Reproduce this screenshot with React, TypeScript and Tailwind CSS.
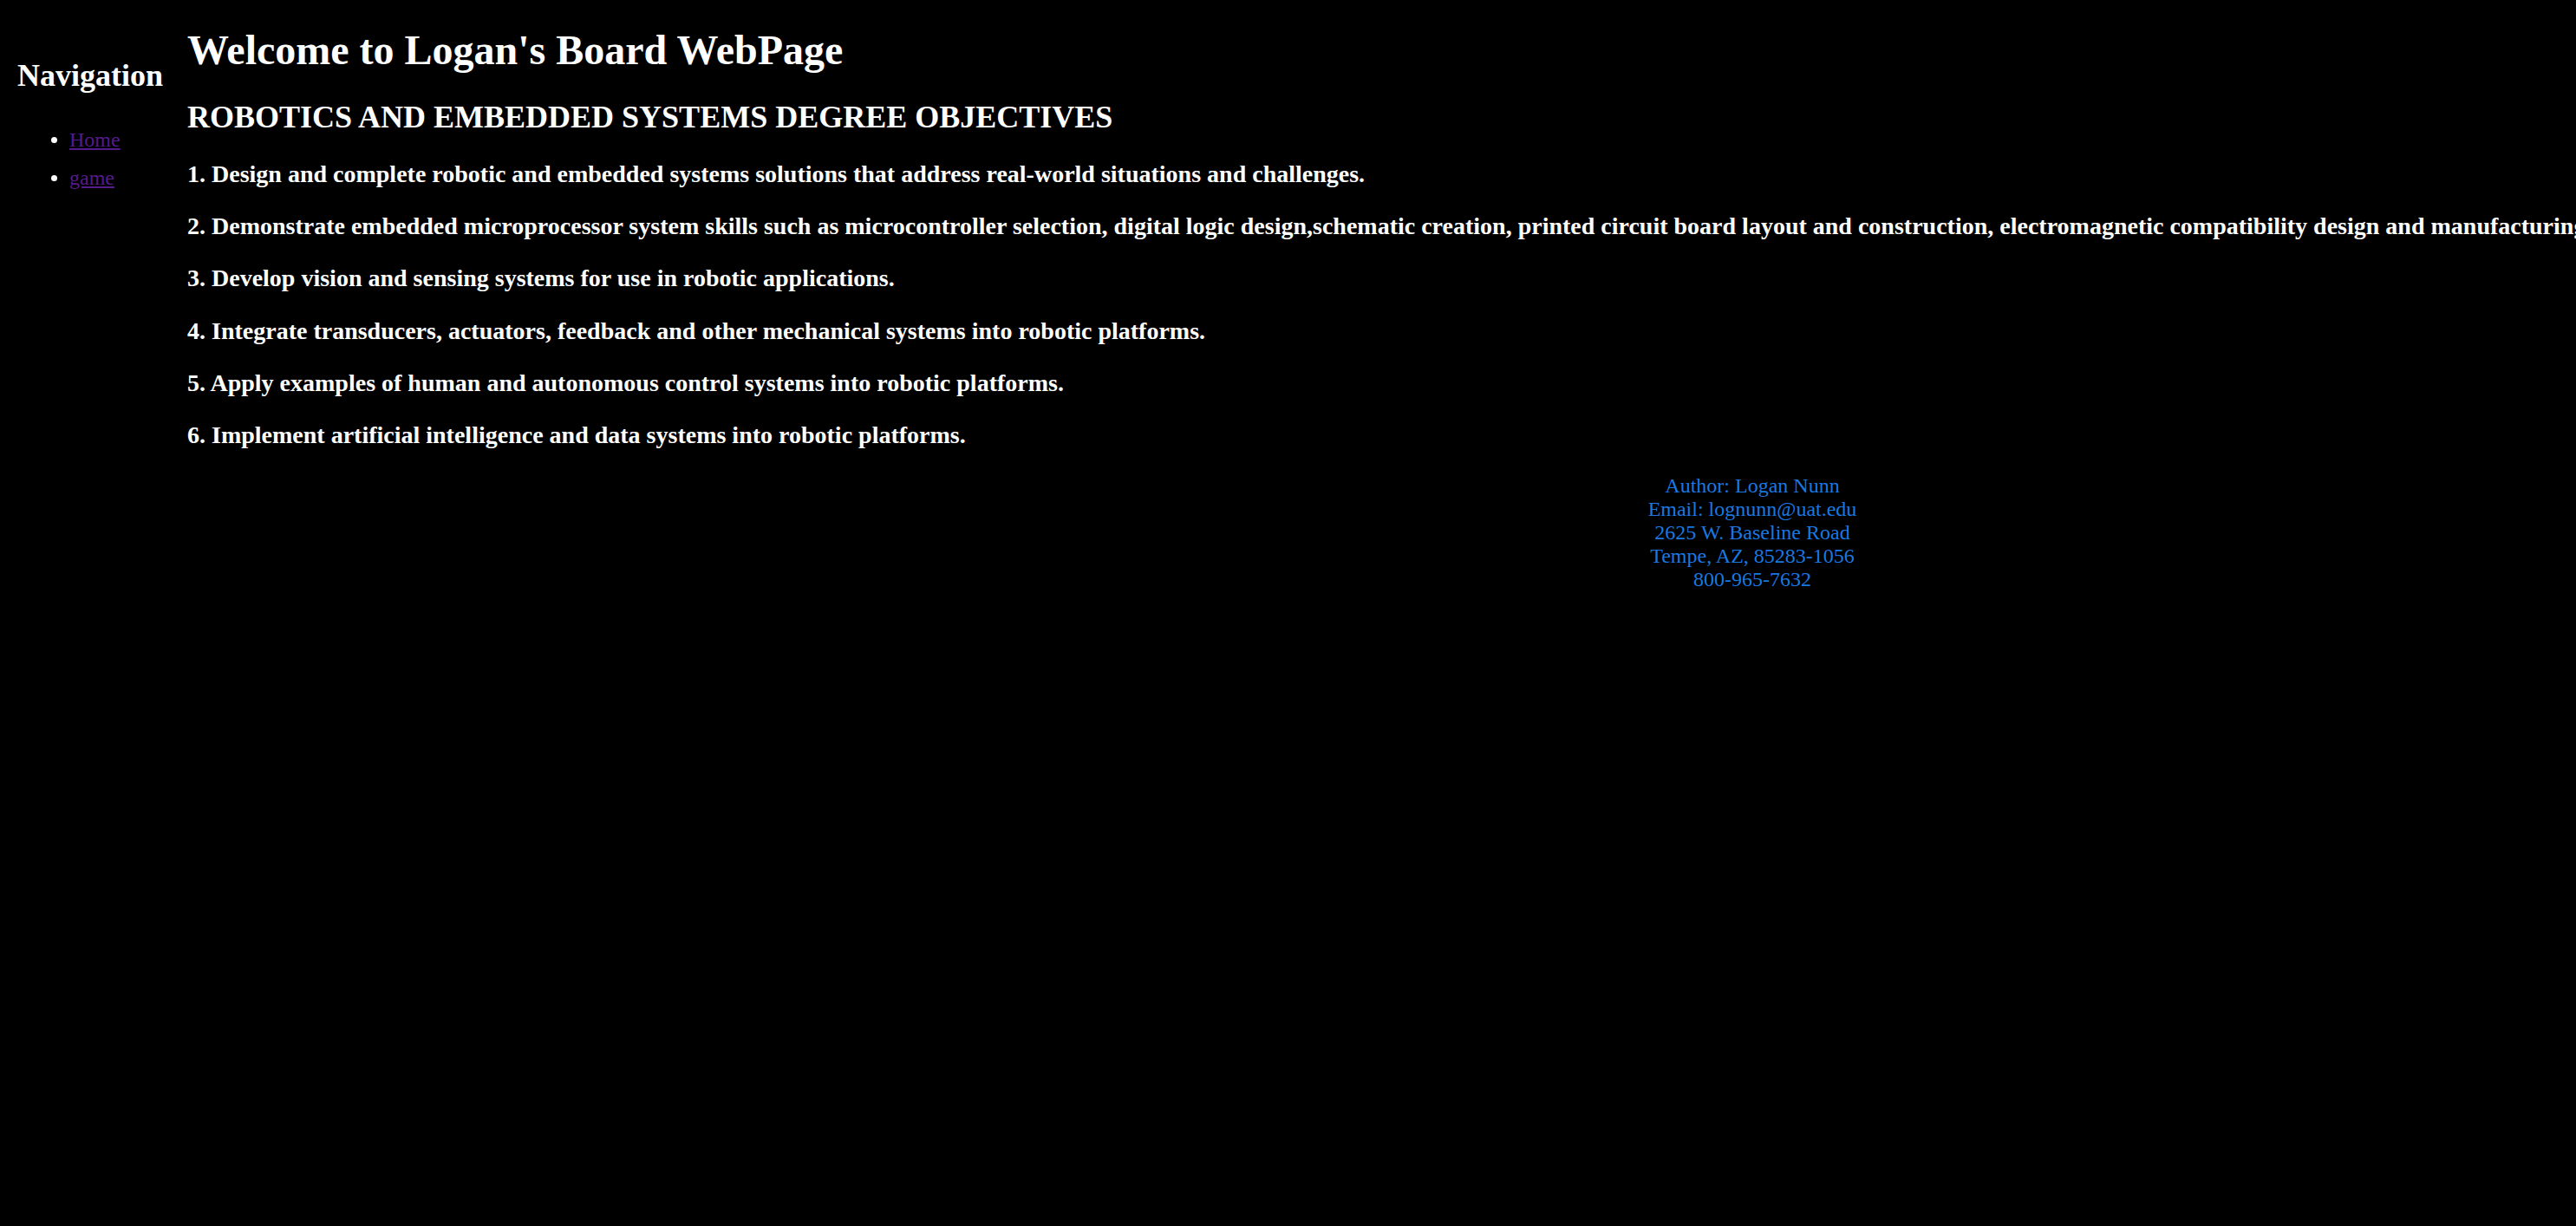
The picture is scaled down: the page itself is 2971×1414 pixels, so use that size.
import React from 'react'

const objectives = [
  '1. Design and complete robotic and embedded systems solutions that address real-world situations and challenges.',
  '2. Demonstrate embedded microprocessor system skills such as microcontroller selection, digital logic design,schematic creation, printed circuit board layout and construction, electromagnetic compatibility design and manufacturing.',
  '3. Develop vision and sensing systems for use in robotic applications.',
  '4. Integrate transducers, actuators, feedback and other mechanical systems into robotic platforms.',
  '5. Apply examples of human and autonomous control systems into robotic platforms.',
  '6. Implement artificial intelligence and data systems into robotic platforms.',
]

export default function App() {
  return (
    <div className="min-h-screen overflow-hidden bg-black font-['Liberation_Serif',serif] text-white">
      <div className="flex items-start">
        {/* Sidebar nav */}
        <nav className="w-[216px] shrink-0 pl-[20px]">
          <h2 className="mt-[67px] text-[36px] font-bold leading-[41px]">Navigation</h2>
          <ul className="mt-[31px] list-disc pl-[60px] text-[24px] leading-[44px]">
            <li>
              <a href="#" className="text-[#551a8b] underline">Home</a>
            </li>
            <li>
              <a href="#" className="text-[#551a8b] underline">game</a>
            </li>
          </ul>
        </nav>

        {/* Main content */}
        <main className="w-[3610px] shrink-0">
          <h1 className="mt-[30px] text-[48px] font-bold leading-[55px]">Welcome to Logan's Board WebPage</h1>
          <h2 className="mt-[30px] text-[36px] font-bold leading-[41px]">ROBOTICS AND EMBEDDED SYSTEMS DEGREE OBJECTIVES</h2>
          <div className="mt-[29px] flex flex-col gap-[28.2px]">
            {objectives.map((o) => (
              <h3 key={o} className="whitespace-nowrap text-[28px] font-bold leading-[32px]">
                {o}
              </h3>
            ))}
          </div>
          <footer className="mt-[29.5px] text-center text-[24px] leading-[26.8px] text-[#1a78e0]">
            <p>Author: Logan Nunn</p>
            <p>Email: lognunn@uat.edu</p>
            <p>2625 W. Baseline Road</p>
            <p>Tempe, AZ, 85283-1056</p>
            <p>800-965-7632</p>
          </footer>
        </main>
      </div>
    </div>
  )
}
